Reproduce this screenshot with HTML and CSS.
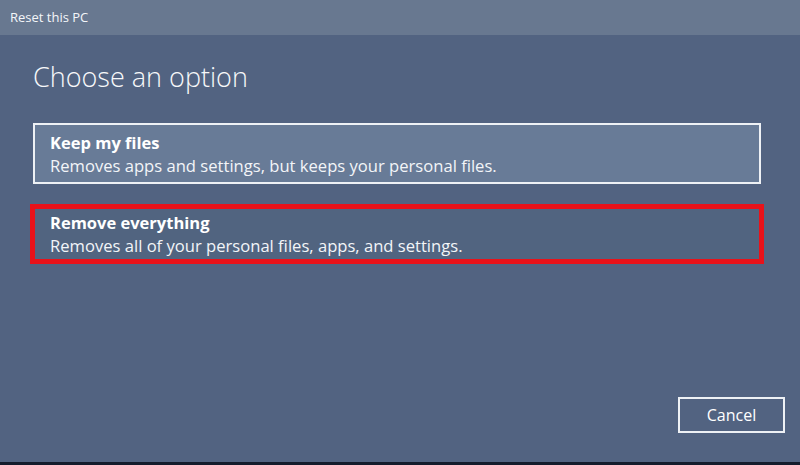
FILE: index.html
```html
<!DOCTYPE html>
<html>
<head>
<meta charset="utf-8">
<link rel="stylesheet" href="styles.css">
</head>
<body>
<div class="window">
  <div class="titlebar">Reset this PC</div>
  <div class="main">
    <h1 class="heading">Choose an option</h1>
    <div class="options">
      <div class="option option-keep">
        <div class="opt-title">Keep my files</div>
        <div class="opt-desc">Removes apps and settings, but keeps your personal files.</div>
      </div>
      <div class="option option-remove">
        <div class="opt-title">Remove everything</div>
        <div class="opt-desc">Removes all of your personal files, apps, and settings.</div>
      </div>
    </div>
    <div class="footer">
      <div class="btn-cancel">Cancel</div>
    </div>
  </div>
  <div class="taskstrip"></div>
</div>
</body>
</html>
```
FILE: styles.css
```css
html, body {
  margin: 0;
  padding: 0;
  width: 800px;
  height: 465px;
  overflow: hidden;
  font-family: "Open Sans", "Noto Sans", sans-serif;
  color: #ffffff;
}
.window {
  width: 800px;
  height: 465px;
  display: flex;
  flex-direction: column;
  background: #526381;
}
.titlebar {
  height: 35px;
  flex: none;
  background: #687890;
  font-size: 13px;
  line-height: 35px;
  padding-left: 10px;
  color: #f4f6f9;
}
.main {
  flex: 1;
  display: flex;
  flex-direction: column;
  padding: 0 39px 0 33px;
  background: #526381;
}
.heading {
  margin: 24px 0 0 0;
  font-size: 27px;
  font-weight: 300;
  line-height: 36px;
  color: #f7f8fa;
}
.options {
  margin-top: 28px;
  display: flex;
  flex-direction: column;
  gap: 20px;
}
.option {
  box-sizing: border-box;
}
.option-keep {
  height: 61px;
  border: 2px solid #eef1f5;
  background: #687b97;
  padding: 6px 15px 0 15px;
}
.option-remove {
  height: 60px;
  margin: 0 -3px;
  border: 5px solid #e8121a;
  background: #516480;
  padding: 2px 15px 0 15px;
}
.opt-title {
  font-size: 16.5px;
  font-weight: 700;
  line-height: 23px;
}
.opt-desc {
  font-size: 16.6px;
  line-height: 23px;
  color: #f3f5f8;
}
.footer {
  margin-top: auto;
  display: flex;
  justify-content: flex-end;
  margin-right: -24px;
  padding-bottom: 29px;
}
.btn-cancel {
  box-sizing: border-box;
  width: 107px;
  height: 36px;
  border: 2px solid #eef1f5;
  font-size: 16px;
  line-height: 32px;
  text-align: center;
}
.taskstrip {
  height: 3px;
  flex: none;
  background: #141c2c;
}
```
